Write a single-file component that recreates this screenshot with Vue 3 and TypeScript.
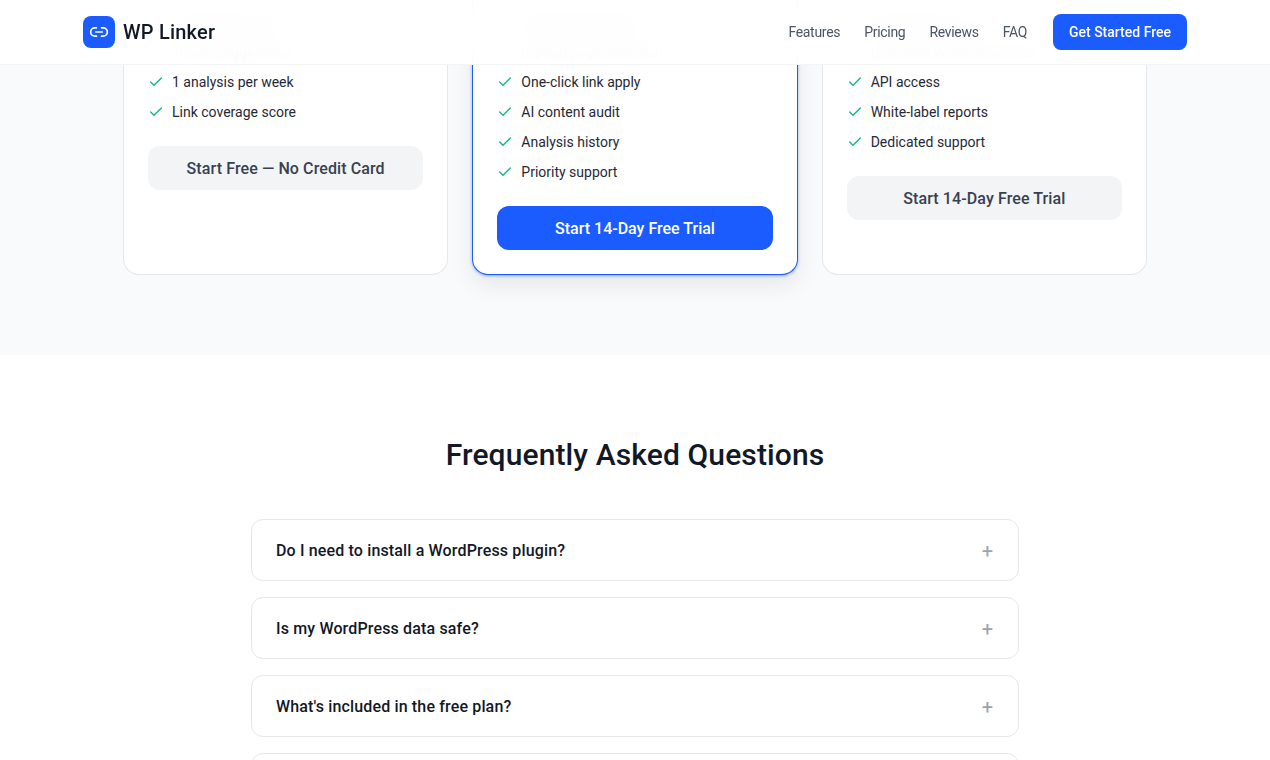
<script setup lang="ts">
interface Plan {
  features: string[]
  cta: string
  featured?: boolean
}

const links = ['Features', 'Pricing', 'Reviews', 'FAQ']

const plans: Plan[] = [
  {
    features: ['1 WordPress site', '10 link suggestions', '1 analysis per week', 'Link coverage score'],
    cta: 'Start Free — No Credit Card',
  },
  {
    features: [
      'Unlimited analyses',
      'Orphan page detection',
      'One-click link apply',
      'AI content audit',
      'Analysis history',
      'Priority support',
    ],
    cta: 'Start 14-Day Free Trial',
    featured: true,
  },
  {
    features: ['Everything in Pro', 'Unlimited WordPress sites', 'API access', 'White-label reports', 'Dedicated support'],
    cta: 'Start 14-Day Free Trial',
  },
]

const questions = [
  'Do I need to install a WordPress plugin?',
  'Is my WordPress data safe?',
  "What's included in the free plan?",
  'Can I cancel at any time?',
]
</script>

<template>
  <div class="page">
    <header class="nav">
      <div class="nav-inner">
        <div class="brand">
          <span class="logo">
            <svg width="20" height="20" viewBox="0 0 24 24" fill="none" stroke="#fff" stroke-width="2" stroke-linecap="round" stroke-linejoin="round">
              <path d="M9 17H7A5 5 0 0 1 7 7h2" />
              <path d="M15 7h2a5 5 0 1 1 0 10h-2" />
              <line x1="8" y1="12" x2="16" y2="12" />
            </svg>
          </span>
          <span class="brand-name">WP Linker</span>
        </div>
        <nav class="links">
          <a v-for="link in links" :key="link" class="link">{{ link }}</a>
          <button class="nav-cta">Get Started Free</button>
        </nav>
      </div>
    </header>

    <section class="pricing">
      <div class="plans">
        <article v-for="(plan, i) in plans" :key="i" class="plan" :class="{ featured: plan.featured }">
          <ul class="features">
            <li v-for="feature in plan.features" :key="feature" class="feature">
              <svg class="check" width="16" height="16" viewBox="0 0 24 24" fill="none" stroke="#10b981" stroke-width="2" stroke-linecap="round" stroke-linejoin="round">
                <polyline points="20 6 9 17 4 12" />
              </svg>
              <span>{{ feature }}</span>
            </li>
          </ul>
          <button class="plan-cta">{{ plan.cta }}</button>
        </article>
      </div>
    </section>

    <section class="faq">
      <h2 class="faq-title">Frequently Asked Questions</h2>
      <div class="faq-list">
        <div v-for="q in questions" :key="q" class="faq-item">
          <span class="question">{{ q }}</span>
          <span class="plus">+</span>
        </div>
      </div>
    </section>
  </div>
</template>

<style scoped>
.page {
  font-family: Roboto, "Noto Sans", sans-serif;
  color: #111827;
  background: #fff;
}

.nav {
  position: fixed;
  top: 0;
  left: 0;
  right: 0;
  z-index: 10;
  background: rgba(255, 255, 255, 0.95);
  backdrop-filter: blur(12px);
  border-bottom: 1px solid #f3f4f6;
}

.nav-inner {
  max-width: 1104px;
  height: 64px;
  margin: 0 auto;
  display: flex;
  align-items: center;
  justify-content: space-between;
}

.brand {
  display: flex;
  align-items: center;
  gap: 8px;
}

.logo {
  width: 32px;
  height: 32px;
  border-radius: 8px;
  background: #1a5cff;
  display: flex;
  align-items: center;
  justify-content: center;
}

.brand-name {
  font-size: 20px;
  font-weight: 500;
  letter-spacing: 0.2px;
  color: #111827;
}

.links {
  display: flex;
  align-items: center;
  gap: 24px;
}

.link {
  font-size: 14px;
  letter-spacing: -0.3px;
  color: #4b5563;
}

.nav-cta {
  height: 36px;
  width: 134px;
  margin-left: 2px;
  border: none;
  border-radius: 8px;
  background: #1a5cff;
  color: #fff;
  font-family: inherit;
  font-size: 14px;
  font-weight: 500;
}

.pricing {
  background: #f9fafb;
  padding-bottom: 80px;
}

.plans {
  max-width: 1024px;
  margin: 0 auto;
  display: grid;
  grid-template-columns: repeat(3, 1fr);
  gap: 24px;
}

.plan {
  background: #fff;
  border: 1px solid #e5e7eb;
  border-top: none;
  border-radius: 0 0 16px 16px;
  padding: 12px 24px 24px;
}

.plan.featured {
  border-color: #1a5cff;
  box-shadow: 0 1px 3px rgba(26, 92, 255, 0.45), 0 10px 25px rgba(0, 0, 0, 0.08);
}

.features {
  list-style: none;
  margin: 0 0 24px;
  padding: 0;
  display: flex;
  flex-direction: column;
  gap: 10px;
}

.feature {
  display: flex;
  align-items: center;
  gap: 8px;
  font-size: 14px;
  line-height: 20px;
  color: #1f2937;
}

.check {
  flex-shrink: 0;
}

.plan-cta {
  width: 100%;
  height: 44px;
  border: none;
  border-radius: 12px;
  background: #f3f4f6;
  color: #374151;
  font-family: inherit;
  font-size: 16px;
  font-weight: 500;
  letter-spacing: 0.1px;
}

.featured .plan-cta {
  background: #1a5cff;
  color: #fff;
  letter-spacing: 0;
}

.faq {
  padding: 80px 0;
}

.faq-title {
  margin: 0 0 48px;
  font-size: 30px;
  line-height: 40px;
  height: 36px;
  font-weight: 500;
  letter-spacing: 0.12px;
  text-align: center;
  color: #111827;
}

.faq-list {
  width: 768px;
  margin: 0 auto;
  display: flex;
  flex-direction: column;
  gap: 16px;
}

.faq-item {
  display: flex;
  align-items: center;
  justify-content: space-between;
  height: 62px;
  box-sizing: border-box;
  padding: 0 24px;
  border: 1px solid #e5e7eb;
  border-radius: 12px;
  background: #fff;
}

.question {
  font-size: 16px;
  font-weight: 500;
  letter-spacing: 0.15px;
  color: #111827;
}

.plus {
  font-size: 20px;
  line-height: 28px;
  margin: 2px 1px 0 0;
  color: #9ca3af;
}
</style>

<style>
html,
body {
  margin: 0;
  overflow: hidden;
}
</style>
